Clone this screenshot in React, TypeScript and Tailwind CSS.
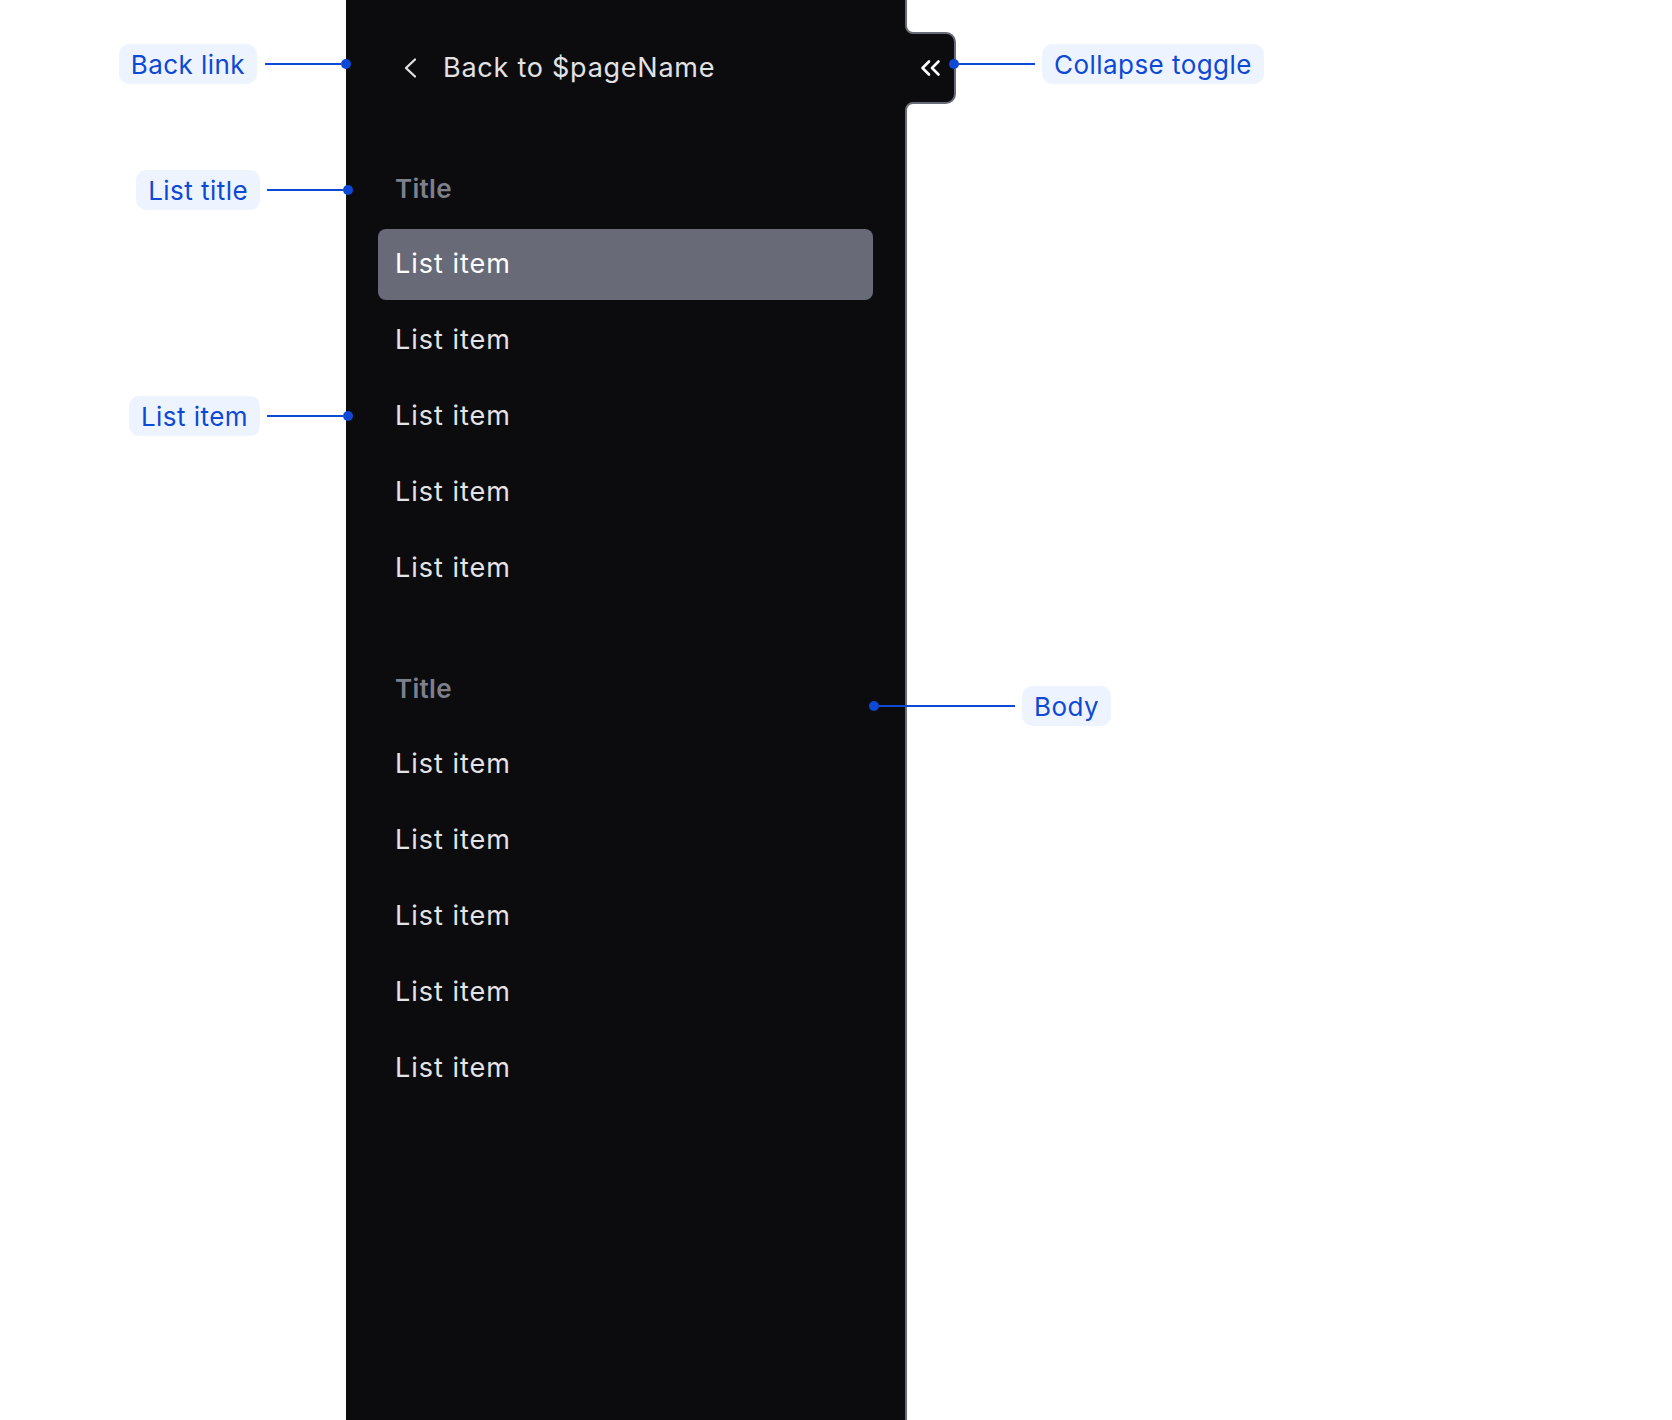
import React from "react";

const FONT = { fontFamily: "Inter, 'Noto Sans', sans-serif" };

function Row({ label, selected }: { label: string; selected?: boolean }) {
  return (
    <div
      className={
        selected
          ? "h-[71px] flex items-center pl-[17px] rounded-lg bg-[#686b77] text-white text-[27px] tracking-[1px]"
          : "h-[71px] flex items-center pl-[17px] rounded-lg text-[#e4e4e7] text-[27px] tracking-[1px]"
      }
    >
      {label}
    </div>
  );
}

function Section({ first }: { first?: boolean }) {
  return (
    <div className="flex flex-col gap-[5px] px-[32px]">
      <div className="h-[71px] flex items-center pl-[17px] text-[26px] font-semibold tracking-[0.3px] text-[#7d808b]">
        Title
      </div>
      <Row label="List item" selected={first} />
      <Row label="List item" />
      <Row label="List item" />
      <Row label="List item" />
      <Row label="List item" />
    </div>
  );
}

function Label({ text }: { text: string }) {
  return (
    <div className="h-[40px] px-3 flex items-center rounded-[10px] bg-[#edf4ff] text-[#0d49d4] text-[26px] tracking-[0.45px] whitespace-nowrap">
      {text}
    </div>
  );
}

function Dot() {
  return <div className="w-[10px] h-[10px] rounded-full bg-[#0d49d4] shrink-0" />;
}

export default function App() {
  return (
    <div className="relative w-[1672px] h-[1420px] bg-white overflow-hidden" style={FONT}>
      <div className="flex h-[1420px]">
        <aside className="ml-[346px] w-[561px] h-[1420px] bg-[#0c0c0e] border-r-2 border-[#696c77] flex flex-col pt-[32px] gap-[49px]">
          <div className="h-[72px] flex items-center pl-[58px] gap-[27px] text-[#e2e2e5] text-[27px] tracking-[0.75px]">
            <svg width="12" height="20" viewBox="0 0 12 20" fill="none">
              <path d="M11 1.5 L2 10 L11 18.5" stroke="#e2e2e5" strokeWidth="2.3" strokeLinecap="round" strokeLinejoin="round" />
            </svg>
            <span>Back to $pageName</span>
          </div>
          <Section first />
          <Section />
        </aside>
      </div>

      {/* Collapse toggle tab */}
      <svg className="absolute left-[905px] top-[20px]" width="54" height="96" viewBox="0 0 54 96" fill="none">
        <path
          d="M0 6 L1 6 A7 7 0 0 0 8 13 L41 13 A9 9 0 0 1 50 22 L50 74 A9 9 0 0 1 41 83 L8 83 A7 7 0 0 0 1 90 L0 90 Z"
          fill="#0c0c0e"
        />
        <path
          d="M1 0 L1 6 A7 7 0 0 0 8 13 L41 13 A9 9 0 0 1 50 22 L50 74 A9 9 0 0 1 41 83 L8 83 A7 7 0 0 0 1 90 L1 96"
          stroke="#696c77"
          strokeWidth="2"
          fill="none"
        />
        <path d="M24 41.5 L17.5 48 L24 54.5" stroke="#ffffff" strokeWidth="2.6" strokeLinecap="round" strokeLinejoin="round" />
        <path d="M33.5 41.5 L27 48 L33.5 54.5" stroke="#ffffff" strokeWidth="2.6" strokeLinecap="round" strokeLinejoin="round" />
      </svg>

      {/* Left annotations */}
      <div className="absolute top-[44px] right-[1321px] flex items-center">
        <Label text="Back link" />
        <div className="ml-[8px] w-[76px] h-[2px] bg-[#0d49d4]" />
        <Dot />
      </div>
      <div className="absolute top-[170px] right-[1319px] flex items-center">
        <Label text="List title" />
        <div className="ml-[7px] w-[76px] h-[2px] bg-[#0d49d4]" />
        <Dot />
      </div>
      <div className="absolute top-[396px] right-[1319px] flex items-center">
        <Label text="List item" />
        <div className="ml-[7px] w-[76px] h-[2px] bg-[#0d49d4]" />
        <Dot />
      </div>

      {/* Right annotations */}
      <div className="absolute top-[44px] left-[949px] flex items-center">
        <Dot />
        <div className="mr-[7px] w-[76px] h-[2px] bg-[#0d49d4]" />
        <Label text="Collapse toggle" />
      </div>
      <div className="absolute top-[686px] left-[869px] flex items-center">
        <Dot />
        <div className="mr-[7px] w-[136px] h-[2px] bg-[#0d49d4]" />
        <Label text="Body" />
      </div>
    </div>
  );
}
